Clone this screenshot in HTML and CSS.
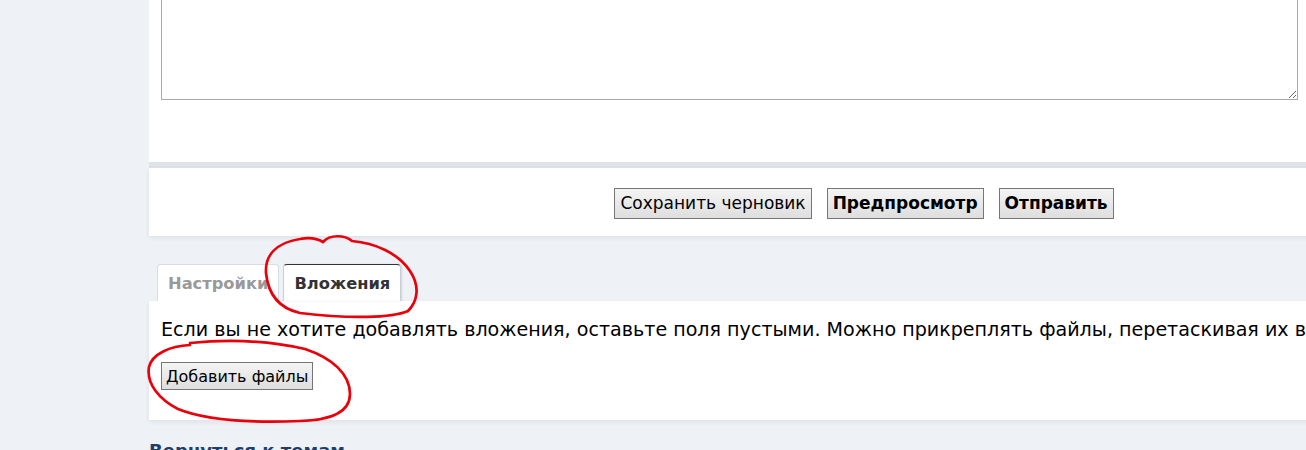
FILE: index.html
```html
<!DOCTYPE html>
<html lang="ru">
<head>
<meta charset="utf-8">
<title>Ответ</title>
<link rel="stylesheet" href="styles.css">
</head>
<body>
<div class="page">
  <div class="wrap">
    <div class="panel editor">
      <textarea class="message"></textarea>
    </div>
    <div class="panel submit">
      <button class="btn">Сохранить черновик</button>
      <button class="btn strong">Предпросмотр</button>
      <button class="btn strong">Отправить</button>
    </div>
    <div class="tabs">
      <div class="tab">Настройки</div>
      <div class="tab active">Вложения</div>
    </div>
    <div class="panel attach">
      <p class="hint">Если вы не хотите добавлять вложения, оставьте поля пустыми. Можно прикреплять файлы, перетаскивая их в</p>
      <button class="btn small">Добавить файлы</button>
    </div>
    <div class="more">Вернуться к темам</div>
  </div>
  <svg class="marks" width="1306" height="450" viewBox="0 0 1306 450">
    <path d="M323 242 C330 234 345 235 352 241 C375 243 398 253 410 271 C420 286 418 301 408 311 C392 318 350 319 300 313 C278 308 268 293 266 273 C265 256 275 243 300 239 C310 237 318 239 323 242 Z" />
    <path d="M190 345 C170 346 152 354 149 367 C146 384 160 400 178 409 C205 420 250 423 300 421 C335 420 350 410 350 394 C350 374 332 358 305 349 C270 341 230 339 190 343" />
  </svg>
</div>
</body>
</html>
```
FILE: styles.css
```css
html, body {
  margin: 0;
  padding: 0;
}
body {
  background: #eef1f5;
  font-family: "DejaVu Sans", Verdana, sans-serif;
  color: #000;
  overflow: hidden;
}
.page {
  position: relative;
  width: 1306px;
  height: 450px;
  overflow: hidden;
}
.wrap {
  margin-left: 149px;
  margin-top: -30px;
  width: 1430px;
}
.panel {
  background: #fff;
}
.editor {
  padding: 0 12px 0 12px;
  height: 198px;
  box-sizing: border-box;
  border-bottom: 6px solid #dfe3e8;
}
.message {
  display: block;
  box-sizing: border-box;
  width: 1137px;
  height: 130px;
  border: 1px solid #aaa;
  margin: 0;
  resize: vertical;
}
.submit {
  height: 68px;
  display: flex;
  align-items: center;
  justify-content: center;
  gap: 15px;
  box-shadow: 0 2px 5px rgba(40, 60, 90, 0.08);
}
.btn {
  font-family: "DejaVu Sans", Verdana, sans-serif;
  font-size: 17px;
  color: #000;
  height: 31px;
  padding: 0 5px;
  border: 1px solid #767676;
  border-radius: 0;
  background: linear-gradient(#f4f4f4, #dedede);
  margin: 0;
  margin-top: 2px;
}
.btn.strong {
  font-weight: bold;
}
.tabs {
  display: flex;
  gap: 4px;
  padding-left: 8px;
  margin-top: 28px;
  height: 37px;
  align-items: flex-end;
}
.tab {
  box-sizing: border-box;
  height: 37px;
  padding: 0 10px;
  display: flex;
  align-items: center;
  font-size: 16.3px;
  font-weight: bold;
  color: #999;
  background: #fff;
  border: 1px solid #d8dce2;
  border-bottom: none;
  border-radius: 4px 4px 0 0;
}
.tab.active {
  color: #333;
  border: 1px solid #c9ced6;
  border-top: 1px solid #333;
  border-bottom: none;
  box-shadow: 1px 0 2px rgba(0,0,0,0.12);
}
.attach {
  height: 119px;
  box-sizing: border-box;
  padding: 17px 12px 0 12px;
  box-shadow: 0 2px 5px rgba(40, 60, 90, 0.08);
}
.hint {
  margin: 0;
  font-size: 19.1px;
  line-height: 24px;
  white-space: nowrap;
}
.btn.small {
  font-size: 16px;
  height: 28px;
  padding: 0 4px;
  margin-top: 20px;
}
.more {
  margin-top: 20px;
  font-size: 18px;
  font-weight: bold;
  color: #1f3f6a;
}
.marks {
  position: absolute;
  left: 0;
  top: 0;
  pointer-events: none;
}
.marks path {
  fill: none;
  stroke: #e8000b;
  stroke-width: 2.7;
  stroke-linecap: round;
  stroke-linejoin: round;
}
```
